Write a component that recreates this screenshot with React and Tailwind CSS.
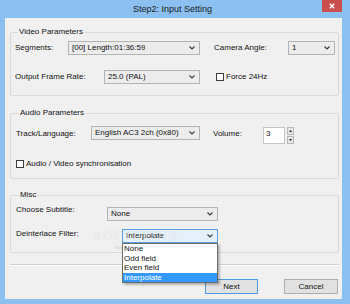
import React from 'react'

const font = "font-['Liberation_Sans',Arial,sans-serif]"

function Chevron() {
  return (
    <svg width="6" height="4" viewBox="0 0 6 4" className="shrink-0">
      <path d="M0.5 0.5 L3 3 L5.5 0.5" fill="none" stroke="#3a3a3a" strokeWidth="1.1" />
    </svg>
  )
}

function Combo({ value, width, focused }) {
  return (
    <div
      className={`flex items-center justify-between h-[14px] pl-[3px] pr-[4px] border text-[8px] leading-none shrink-0 ${
        focused ? 'border-[#5a9fe0] bg-[#e6f0fa]' : 'border-[#b4b4b4] bg-[#ececec]'
      } ${width}`}
    >
      <span className="truncate">{value}</span>
      <Chevron />
    </div>
  )
}

function Check({ label }) {
  return (
    <div className="flex items-center h-[10px]">
      <div className="w-[8px] h-[8px] border border-[#3c3c3c] bg-white shrink-0" />
      <span className="ml-[2px] text-[8px] leading-[10px]">{label}</span>
    </div>
  )
}

function Group({ title, className, children }) {
  return (
    <fieldset className={`border border-[#d9d9d9] rounded-[2px] ${className}`}>
      <legend className="ml-[3px] px-[1px] text-[8px] leading-[10px]">{title}</legend>
      {children}
    </fieldset>
  )
}

export default function App() {
  const options = ['None', 'Odd field', 'Even field', 'Interpolate']

  return (
    <div className={`w-[350px] h-[304px] bg-[#8bc0f1] flex flex-col pl-[5px] pr-[8px] pb-[5px] text-[#111] ${font}`}>
      {/* Title bar */}
      <div className="grid grid-cols-[1fr_auto_1fr] h-[18px] -mr-[3px] -ml-[5px]">
        <div />
        <div className="text-[9px] leading-[19px] text-[#1a1a1a]">Step2: Input Setting</div>
        <div className="flex justify-end pr-[3px]">
          <div className="w-[20px] h-[12px] bg-[#c9504d] flex items-center justify-center">
            <svg width="6" height="6" viewBox="0 0 6 6">
              <path d="M0.8 0.8 L5.2 5.2 M5.2 0.8 L0.8 5.2" stroke="#fff" strokeWidth="1.4" />
            </svg>
          </div>
        </div>
      </div>

      {/* Dialog body */}
      <div className="relative flex-1 bg-[#f0f0f0] pt-[9px] pl-[5px] pr-[3px] flex flex-col">
        <Group title="Video Parameters" className="pl-[4px] pb-[11px]">
          <div className="flex items-center h-[14px] mt-[4px]">
            <span className="w-[53px] text-[8px]">Segments:</span>
            <Combo value="[00] Length:01:36:59" width="w-[132px]" />
            <span className="ml-[14px] w-[74px] text-[8px]">Camera Angle:</span>
            <Combo value="1" width="w-[47px]" />
          </div>
          <div className="flex items-center h-[14px] mt-[15px]">
            <span className="w-[89px] text-[8px]">Output Frame Rate:</span>
            <Combo value="25.0  (PAL)" width="w-[96px]" />
            <div className="ml-[16px]">
              <Check label="Force 24Hz" />
            </div>
          </div>
        </Group>

        <Group title="Audio Parameters" className="mt-[12px] pl-[5px] pb-[9px]">
          <div className="flex items-start mt-[8px]">
            <span className="w-[75px] mt-[3px] text-[8px] leading-[10px]">Track/Language:</span>
            <Combo value="English AC3 2ch (0x80)" width="w-[109px]" />
            <span className="ml-[13px] w-[50px] mt-[3px] text-[8px] leading-[10px]">Volume:</span>
            <div className="mt-[1px] w-[22px] h-[17px] bg-white border border-[#c4c4c4] text-[8px] leading-[10px] pl-[2px] pt-[1px]">3</div>
            <div className="ml-[2px] mt-[1px] flex flex-col gap-[1px]">
              <div className="w-[7px] h-[8px] bg-[#e6e6e6] border border-[#b8b8b8] flex items-center justify-center">
                <svg width="3" height="2" viewBox="0 0 3 2"><path d="M0 2 L1.5 0 L3 2 Z" fill="#222" /></svg>
              </div>
              <div className="w-[7px] h-[8px] bg-[#e6e6e6] border border-[#b8b8b8] flex items-center justify-center">
                <svg width="3" height="2" viewBox="0 0 3 2"><path d="M0 0 L1.5 2 L3 0 Z" fill="#222" /></svg>
              </div>
            </div>
          </div>
          <div className="mt-[15px]">
            <Check label="Audio / Video synchronisation" />
          </div>
        </Group>

        <Group title="Misc" className="mt-[11px] pl-[5px] pb-[9px]">
          <div className="flex items-start mt-[5px]">
            <span className="w-[91px] text-[8px] leading-[10px]">Choose Subtitle:</span>
            <div className="mt-[2px]">
              <Combo value="None" width="w-[111px]" />
            </div>
          </div>
          <div className="flex items-start mt-[8px]">
            <span className="w-[106px] text-[8px] leading-[10px]">Deinterlace Filter:</span>
            <div className="relative">
              <Combo value="Interpolate" width="w-[96px]" focused />
              {/* open dropdown list */}
              <div className="absolute left-0 top-full z-10 w-[96px] bg-white border border-[#6b6b6b] shadow-[2px_2px_2px_rgba(0,0,0,0.25)] flex flex-col">
                {options.map((o) => (
                  <div
                    key={o}
                    className={`h-[9.5px] pl-[1px] text-[8px] leading-[10px] ${
                      o === 'Interpolate' ? 'bg-[#3399ff] text-white' : ''
                    }`}
                  >
                    {o}
                  </div>
                ))}
              </div>
            </div>
          </div>
        </Group>

        <div className="mt-[11px] border-t border-[#cfcfcf] border-b border-b-white" />

        <div className="flex justify-end gap-[26px] mt-[13px] mr-[1px]">
          <button className="w-[53px] h-[15px] bg-[#e1e1e1] border border-[#4f9be0] text-[8px] leading-none text-[#111]">Next</button>
          <button className="w-[54px] h-[15px] bg-[#e1e1e1] border border-[#adadad] text-[8px] leading-none text-[#111]">Cancel</button>
        </div>

        {/* watermark */}
        <div className="pointer-events-none absolute left-[88px] top-[209px] z-20 text-[12px] tracking-[2px] font-bold text-white/40 [text-shadow:0_0_1px_rgba(0,0,0,0.08)]">SOFTPEDIA</div>
        <div className="pointer-events-none absolute left-[110px] top-[226px] text-[5px] text-[#cfcfcf]">www.softpedia.com</div>
      </div>
    </div>
  )
}
